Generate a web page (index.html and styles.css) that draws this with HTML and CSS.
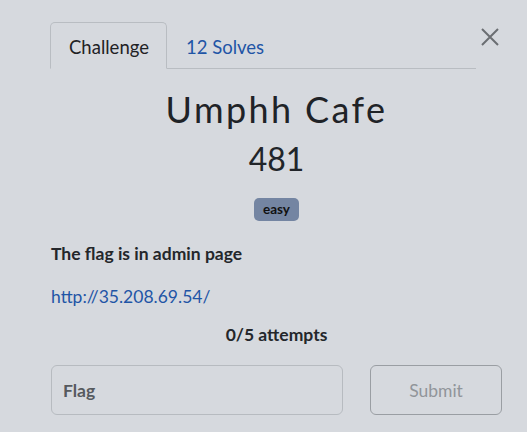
FILE: index.html
```html
<!DOCTYPE html>
<html>
<head>
<meta charset="utf-8">
<link rel="stylesheet" href="styles.css">
</head>
<body>
<div class="modal">
  <div class="top">
    <nav class="tabs">
      <span class="tab active">Challenge</span>
      <span class="tab link">12 Solves</span>
    </nav>
    <button class="close" aria-label="Close">
      <svg width="20" height="20" viewBox="0 0 20 20"><path d="M2 2 L18 18 M18 2 L2 18" stroke="#6b6e72" stroke-width="2" fill="none"/></svg>
    </button>
  </div>
  <h1 class="title">Umphh Cafe</h1>
  <div class="value">481</div>
  <div class="badges"><span class="badge">easy</span></div>
  <p class="desc">The flag is in admin page</p>
  <p class="url"><a href="#">http://35.208.69.54/</a></p>
  <div class="attempts">0/5 attempts</div>
  <div class="form">
    <div class="input">Flag</div>
    <div class="submit">Submit</div>
  </div>
</div>
</body>
</html>
```
FILE: styles.css
```css
html, body {
  margin: 0;
  padding: 0;
  background: #d6d9de;
  font-family: Lato, "Noto Sans", sans-serif;
  color: #212529;
}
.modal {
  width: 451px;
  padding: 22px 0 0 51px;
}
.top {
  display: flex;
  align-items: flex-start;
  height: 47px;
}
.tabs {
  display: flex;
  width: 425px;
  border-bottom: 1px solid #b9bdc2;
  height: 46px;
}
.tab {
  box-sizing: border-box;
  height: 47px;
  display: flex;
  align-items: center;
  font-size: 18.5px;
  padding: 0 18px;
}
.tab.active {
  border: 1px solid #b9bdc2;
  border-bottom-color: #d6d9de;
  border-radius: 5px 5px 0 0;
  width: 117px;
  margin-left: -1px;
  color: #1f2225;
  padding-top: 2px;
}
.tab.link {
  color: #1f55a6;
  padding-left: 19px;
  padding-top: 2px;
}
.close {
  margin-left: 4px;
  margin-top: 5px;
  background: none;
  border: 0;
  padding: 0;
  width: 20px;
  height: 20px;
  display: flex;
}
.title {
  margin: 18px 0 0;
  text-align: center;
  font-weight: 400;
  font-size: 36px;
  letter-spacing: 2.4px;
  line-height: 44px;
  color: #1f2327;
}
.value {
  text-align: center;
  font-size: 32px;
  line-height: 40px;
  margin-top: 8px;
  color: #212529;
}
.badges {
  text-align: center;
  margin-top: 19px;
  height: 23px;
}
.badge {
  display: inline-block;
  background: #7485a2;
  color: #111;
  font-weight: 700;
  font-size: 13.5px;
  line-height: 23px;
  padding: 0 9px;
  border-radius: 5px;
}
.desc {
  margin: 20px 0 0;
  font-size: 17.5px;
  font-weight: 700;
  line-height: 25px;
  color: #24272b;
}
.url {
  margin: 18px 0 0;
  font-size: 17.5px;
  line-height: 25px;
}
.url a {
  color: #1f55a6;
  text-decoration: none;
}
.attempts {
  margin-top: 13px;
  text-align: center;
  font-size: 17.5px;
  font-weight: 700;
  line-height: 25px;
  color: #24272b;
}
.form {
  display: flex;
  margin-top: 18px;
  gap: 27px;
}
.input {
  box-sizing: border-box;
  width: 292px;
  height: 50px;
  border: 1px solid #b7bbc0;
  border-radius: 6px;
  display: flex;
  align-items: center;
  padding-left: 11px;
  font-size: 17.5px;
  font-weight: 700;
  color: #565a5e;
}
.submit {
  box-sizing: border-box;
  width: 132px;
  height: 50px;
  border: 1px solid #9a9ea3;
  border-radius: 6px;
  display: flex;
  align-items: center;
  justify-content: center;
  font-size: 17.5px;
  color: #91959a;
}
```
